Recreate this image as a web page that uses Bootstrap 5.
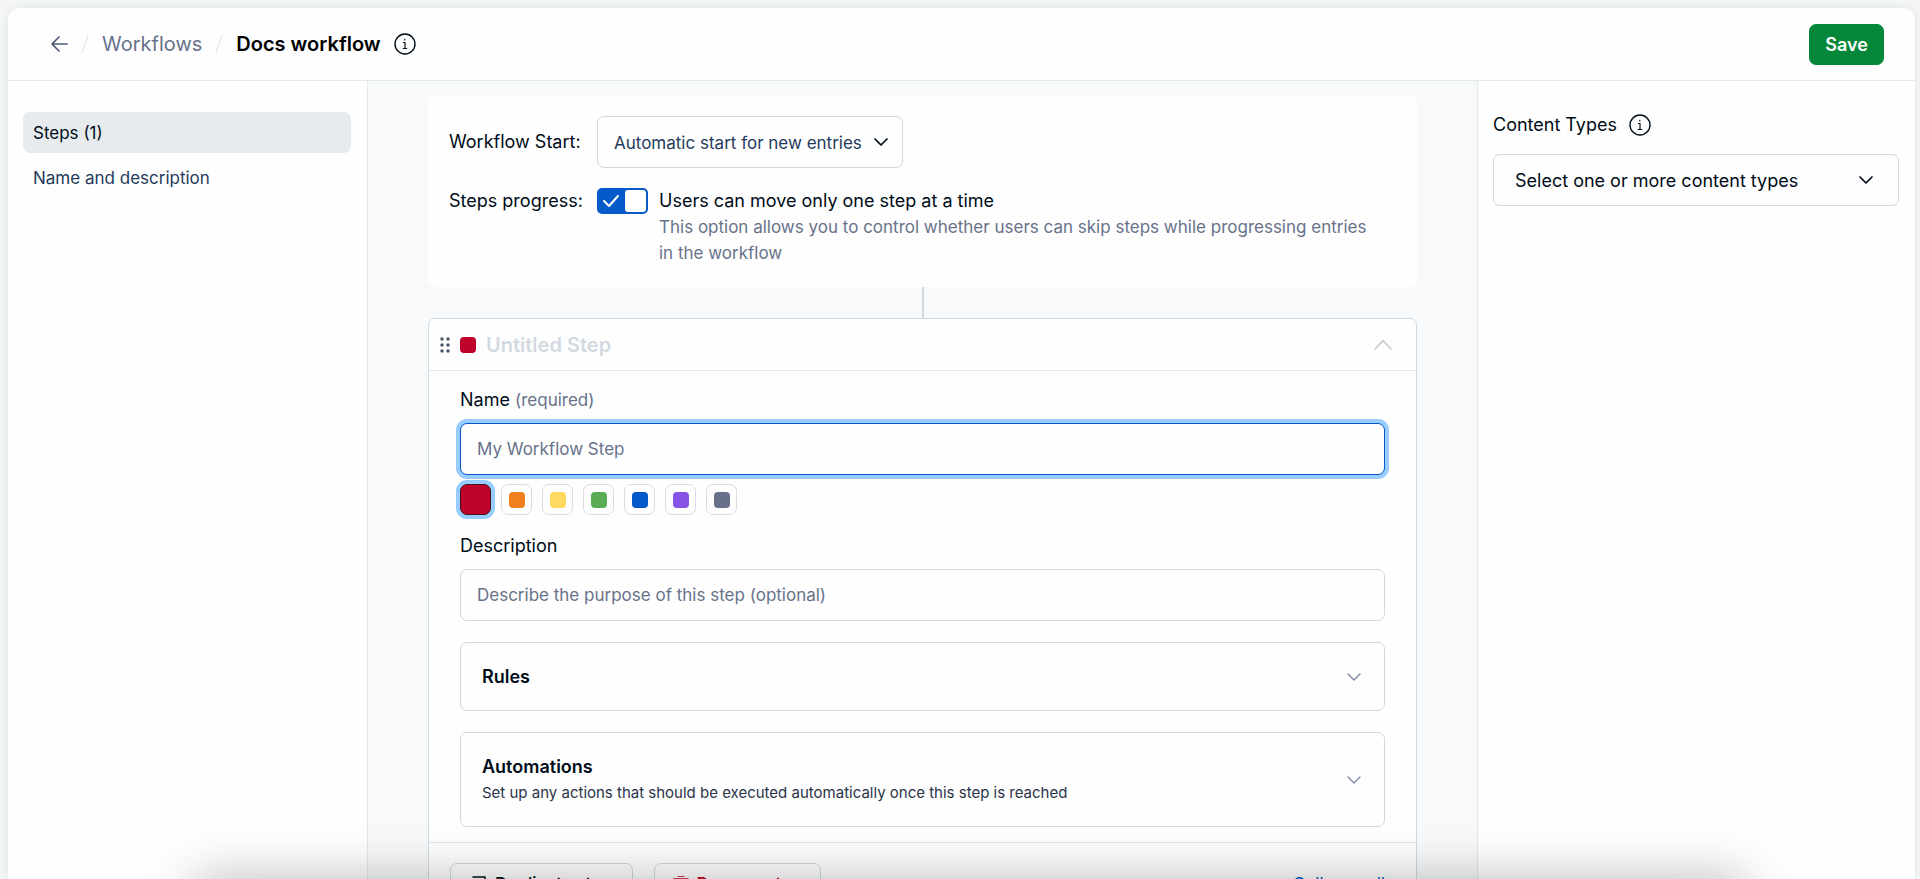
<!DOCTYPE html>
<html lang="en">
<head>
<meta charset="utf-8">
<meta name="viewport" content="width=device-width, initial-scale=1">
<title>Docs workflow</title>
<link href="https://cdn.jsdelivr.net/npm/bootstrap@5.3.0/dist/css/bootstrap.min.css" rel="stylesheet">
<style>
  :root { --ink: #000c18; --muted: #67728a; --line: #cfd9e0; --soft: #e3e8ea; --blue: #0659c8; }
  body { font-family: Inter, "Liberation Sans", sans-serif; font-size: 17px; line-height: 26px; color: var(--ink); background: #f3f5f6; }
  svg { flex: none; fill: none; stroke: currentColor; stroke-linecap: round; stroke-linejoin: round; }
  button { color: inherit; }
  .shell { padding: 8px 5px 0 8px; }
  .window { background: #fefefe; border-radius: 12px 12px 0 0; box-shadow: 0 0 8px rgba(30, 50, 70, .08); }
  .topbar { height: 73px; padding: 0 31px 0 40px; border-bottom: 1px solid var(--soft); font-size: 20px; }
  .topbar a { color: var(--muted); text-decoration: none; }
  .topbar nav { gap: 13px; }
  .topbar .back { color: #4b5873; margin-right: -4px; }
  .crumb-sep { color: #dde2e6; }
  .page-name { font-size: 20px; font-weight: 600; line-height: 26px; color: #000; }
  .btn-save { --bs-btn-bg: #05873a; --bs-btn-border-color: #05873a; --bs-btn-color: #fff; --bs-btn-hover-bg: #04702f; --bs-btn-hover-color: #fff; width: 75px; height: 41px; padding: 0; border-radius: 7px; font-size: 18px; font-weight: 600; }
  .side-left { width: 360px; padding: 31px 16px 0 15px; border-right: 1px solid var(--soft); }
  .side-left .nav-link { height: 41px; padding: 0 10px; border-radius: 7px; color: #253a5c; display: flex; align-items: center; }
  .side-left .nav-link.active { background: #e7ebee; color: var(--ink); }
  .side-right { width: 438px; padding: 31px 16px 0 15px; border-left: 1px solid var(--soft); }
  .types-head { gap: 12px; }
  .canvas { background: #f7f9fa; padding: 14px 60px 0; scrollbar-width: none; }
  .canvas::-webkit-scrollbar { display: none; }
  .settings { background: #fefefe; border-radius: 7px; padding: 21px; }
  .dark-label { font-size: 18px; }
  .row-label { width: 148px; }
  .progress-text { padding-right: 20px; }
  .form-select, .form-control { height: 52px; border-color: var(--line); border-radius: 7px; font-size: inherit; color: var(--ink); background-color: #fefefe; }
  .form-select { background-image: url("data:image/svg+xml,%3Csvg xmlns='http://www.w3.org/2000/svg' viewBox='0 0 16 16' fill='none' stroke='%23000c18' stroke-width='1.700' stroke-linecap='round' stroke-linejoin='round'%3E%3Cpath d='M2 5l6 6 6-6'/%3E%3C/svg%3E"); background-size: 16px 16px; background-position: right 24px center; padding: 0 48px 0 21px; }
  .select-start { width: 306px; padding: 4px 30px 0 16px; color: #253a5c; background-position: right 13px center; }
  .select-types { font-size: 18px; }
  .form-control { padding: 0 16px; }
  .form-control::placeholder { color: var(--muted); opacity: 1; }
  .form-control:focus { border-color: var(--blue); box-shadow: 0 0 0 4px #98cbff; background-color: #fefefe; }
  .toggle { appearance: none; flex: none; width: 51px; height: 26px; margin: 0 11px 0 0; border: 0; border-radius: 5px; background: #0659c8 url("data:image/svg+xml,%3Csvg xmlns='http://www.w3.org/2000/svg' viewBox='0 0 51 26'%3E%3Crect x='28' y='2' width='21' height='22' rx='3' fill='%23fff'/%3E%3Cpath d='M7 13l5 5 9-10' fill='none' stroke='%23fff' stroke-width='2' stroke-linecap='round' stroke-linejoin='round'/%3E%3C/svg%3E"); }
  .muted { color: var(--muted); font-size: 17px; }
  .connector { width: 2px; height: 31px; background: var(--line); }
  .step { background: #fefefe; border: 1px solid var(--line); border-radius: 7px 7px 0 0; }
  .step-head { height: 52px; padding: 0 23px 0 10px; border-bottom: 1px solid var(--soft); }
  .step-name { font-size: 20px; font-weight: 600; line-height: 26px; color: #d2d9df; }
  .grip { fill: #46536b; stroke: none; }
  .chip { width: 16px; height: 16px; border-radius: 4px; background: #bf0229; margin: 0 10px 0 9px; }
  .chevron-pale { stroke: #bfc4ca; }
  .chevron { stroke: #7b85a0; }
  .step-body { padding: 16px 31px 15px; }
  .field-label { display: block; margin-bottom: 10px; }
  .swatch-row { gap: 10px; margin: 9px 0 18px; }
  .swatch { appearance: none; width: 31px; height: 31px; margin: 0; border: 1px solid #d8dee2; border-radius: 7px; display: grid; place-items: center; }
  .swatch::before { content: ""; width: 16px; height: 16px; border-radius: 4px; background: var(--tone); }
  .swatch:checked { background: var(--tone); border-color: #45101c; box-shadow: 0 0 0 4px #98cbff; }
  .fold { display: flex; align-items: center; justify-content: space-between; width: 100%; margin-top: 21px; padding: 21px 23px 20px 21px; border: 1px solid var(--line); border-radius: 7px; background: none; text-align: left; }
  .fold-title { font-size: 18px; font-weight: 600; line-height: 26px; }
  .fold-note { font-size: 15px; line-height: 26px; color: #2a3448; }
  .step-foot { gap: 21px; padding: 20px 31px 20px 21px; border-top: 1px solid var(--soft); }
  .btn-foot { height: 42px; padding: 0 20px; border: 1px solid var(--line); border-radius: 7px; display: flex; align-items: center; gap: 8px; font-weight: 500; background: none; }
  .btn-remove { color: #c00023; padding: 0 18px; }
  .link-blue { color: var(--blue); text-decoration: none; }
  .dock-shade { left: 10%; right: 9%; bottom: -100px; height: 100px; border-radius: 20px; box-shadow: 0 0 52px rgba(0, 0, 0, .28); pointer-events: none; }
</style>
</head>
<body>
<div class="shell vh-100 overflow-hidden">
  <div class="window h-100 d-flex flex-column overflow-hidden">
    <header class="topbar flex-shrink-0 d-flex align-items-center justify-content-between">
      <nav class="d-flex align-items-center" aria-label="Breadcrumb">
        <a href="#" class="back d-flex" aria-label="Back"><svg width="24" height="24" viewBox="0 0 24 24" stroke-width="1.700"><path d="M19 12H4.500M11 5l-7 7 7 7"/></svg></a>
        <svg class="crumb-sep" width="8" height="20" viewBox="0 0 8 20"><path d="M7 1L1 19"/></svg>
        <a href="#">Workflows</a>
        <svg class="crumb-sep" width="8" height="20" viewBox="0 0 8 20"><path d="M7 1L1 19"/></svg>
        <h1 class="page-name m-0">Docs workflow</h1>
        <svg width="22" height="22" viewBox="0 0 22 22" stroke-width="1.400"><circle cx="11" cy="11" r="10"/><path stroke-width="1.200" d="M9.500 9.500H11V15.500M9.300 15.500H12.700M10.800 6.300v.6"/></svg>
      </nav>
      <button class="btn btn-save" type="button">Save</button>
    </header>
    <div class="d-flex flex-grow-1 overflow-hidden">
      <aside class="side-left flex-shrink-0">
        <nav class="nav flex-column gap-1" aria-label="Sections">
          <a class="nav-link active" href="#">Steps (1)</a>
          <a class="nav-link" href="#">Name and description</a>
        </nav>
      </aside>
      <main class="canvas flex-grow-1 overflow-auto">
        <section class="settings">
          <div class="d-flex align-items-center mb-3">
            <label class="row-label dark-label" for="start">Workflow Start:</label>
            <select class="form-select select-start" id="start"><option>Automatic start for new entries</option></select>
          </div>
          <div class="d-flex align-items-start pt-1">
            <label class="row-label dark-label flex-shrink-0" for="progress">Steps progress:</label>
            <input class="toggle" type="checkbox" role="switch" id="progress" checked>
            <div class="progress-text">
              <div class="dark-label">Users can move only one step at a time</div>
              <div class="muted">This option allows you to control whether users can skip steps while progressing entries in the workflow</div>
            </div>
          </div>
        </section>
        <div class="connector mx-auto"></div>
        <section class="step">
          <div class="step-head d-flex align-items-center">
            <svg class="grip" width="12" height="16" viewBox="0 0 12 16"><circle cx="3" cy="2" r="1.700"/><circle cx="9" cy="2" r="1.700"/><circle cx="3" cy="8" r="1.700"/><circle cx="9" cy="8" r="1.700"/><circle cx="3" cy="14" r="1.700"/><circle cx="9" cy="14" r="1.700"/></svg>
            <span class="chip"></span>
            <h2 class="step-name m-0 flex-grow-1">Untitled Step</h2>
            <button class="btn p-0 border-0 d-flex" type="button" aria-label="Collapse"><svg class="chevron-pale" width="20" height="20" viewBox="0 0 20 20" stroke-width="1.400"><path d="M2 14l8-8.500 8 8.500"/></svg></button>
          </div>
          <div class="step-body">
            <label class="field-label dark-label" for="name">Name <span class="muted">(required)</span></label>
            <input class="form-control" id="name" type="text" placeholder="My Workflow Step" autofocus>
            <div class="swatch-row d-flex" role="radiogroup" aria-label="Color">
              <input class="swatch" type="radio" name="tone" aria-label="Red" style="--tone:#bf0229" checked>
              <input class="swatch" type="radio" name="tone" aria-label="Orange" style="--tone:#f0801e">
              <input class="swatch" type="radio" name="tone" aria-label="Yellow" style="--tone:#ffd960">
              <input class="swatch" type="radio" name="tone" aria-label="Green" style="--tone:#5aad54">
              <input class="swatch" type="radio" name="tone" aria-label="Blue" style="--tone:#0359cc">
              <input class="swatch" type="radio" name="tone" aria-label="Purple" style="--tone:#8752e6">
              <input class="swatch" type="radio" name="tone" aria-label="Gray" style="--tone:#67728a">
            </div>
            <label class="field-label dark-label" for="desc">Description</label>
            <input class="form-control" id="desc" type="text" placeholder="Describe the purpose of this step (optional)">
            <button class="fold" type="button">
              <span class="fold-title">Rules</span>
              <svg class="chevron" width="14" height="14" viewBox="0 0 14 14" stroke-width="1.300"><path d="M1 4l6 6 6-6"/></svg>
            </button>
            <button class="fold" type="button">
              <span class="d-flex flex-column"><span class="fold-title">Automations</span><span class="fold-note">Set up any actions that should be executed automatically once this step is reached</span></span>
              <svg class="chevron" width="14" height="14" viewBox="0 0 14 14" stroke-width="1.300"><path d="M1 4l6 6 6-6"/></svg>
            </button>
          </div>
          <div class="step-foot d-flex align-items-center">
            <button class="btn-foot" type="button"><svg width="16" height="16" viewBox="0 0 16 16" stroke-width="1.500"><path d="M2 1h12v12M1 5h9v10H1z"/></svg>Duplicate step</button>
            <button class="btn-foot btn-remove" type="button"><svg width="16" height="16" viewBox="0 0 16 16" stroke-width="1.500"><path d="M5 0h6M1 3h14M3 3v12h10V3M6.500 6v6M9.500 6v6"/></svg>Remove step</button>
            <a class="link-blue ms-auto" href="#">Collapse all</a>
          </div>
        </section>
      </main>
      <aside class="side-right flex-shrink-0">
        <div class="types-head d-flex align-items-center">
          <label class="dark-label" for="types">Content Types</label>
          <svg width="22" height="22" viewBox="0 0 22 22" stroke-width="1.400"><circle cx="11" cy="11" r="10"/><path stroke-width="1.200" d="M9.500 9.500H11V15.500M9.300 15.500H12.700M10.800 6.300v.6"/></svg>
        </div>
        <select class="form-select select-types mt-3" id="types"><option>Select one or more content types</option></select>
      </aside>
    </div>
  </div>
</div>
<div class="dock-shade position-fixed"></div>
<script src="https://cdn.jsdelivr.net/npm/bootstrap@5.3.0/dist/js/bootstrap.bundle.min.js"></script>
</body>
</html>
